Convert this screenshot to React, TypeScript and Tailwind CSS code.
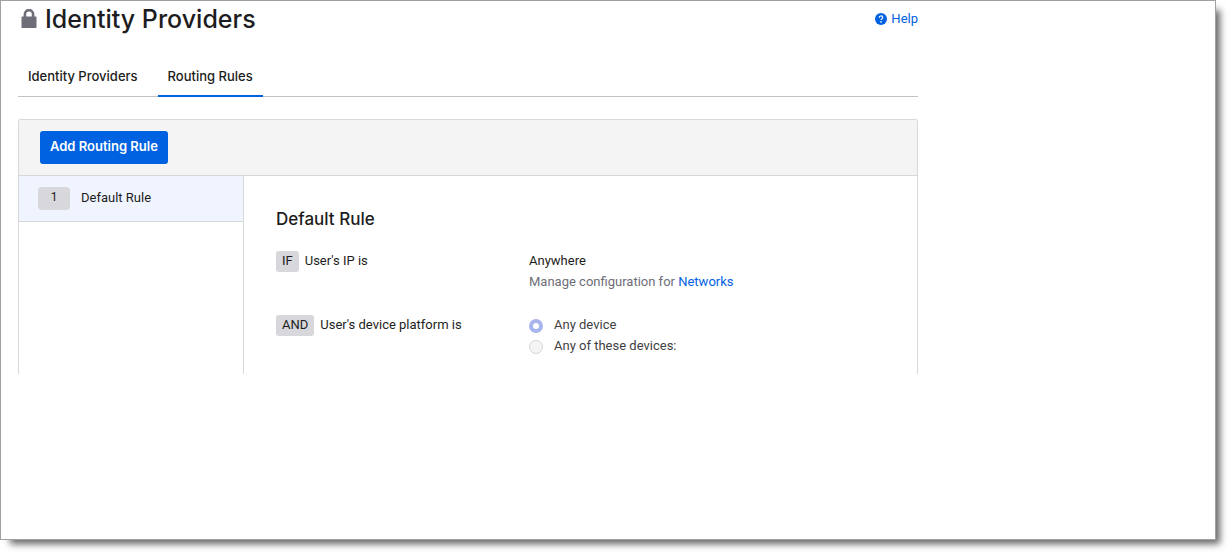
import React from "react";

const tabs = [
    { label: "Identity Providers", active: false },
    { label: "Routing Rules", active: true },
];

const rules = [{ position: 1, name: "Default Rule" }];

const devices = [
    { id: "any", label: "Any device" },
    { id: "some", label: "Any of these devices:" },
];

function LockIcon() {
    return (
        <svg viewBox="0 0 16 20" className="w-4 h-5 shrink-0" aria-hidden="true">
            <path d="M3.9 9V5.2a4.1 4.1 0 0 1 8.2 0V9" fill="none" stroke="#6e6e78" strokeWidth="2.6" />
            <rect x="0.5" y="7.5" width="15" height="11.5" rx="0.8" fill="#6e6e78" />
        </svg>
    );
}

function HelpIcon() {
    return (
        <svg viewBox="0 0 12 12" className="w-3 h-3" aria-hidden="true">
            <circle cx="6" cy="6" r="6" fill="#0062e0" />
            <path d="M4.3 4.7a1.7 1.6 0 1 1 2.5 1.3c-.6.35-.8.5-.8 1.1" fill="none" stroke="#fff" strokeWidth="1.2" />
            <circle cx="6" cy="8.9" r="0.8" fill="#fff" />
        </svg>
    );
}

function Keyword({ children }: { children: React.ReactNode }) {
    return (
        <span className="h-[21px] mt-px px-1.5 rounded-[3px] bg-[#d7d7dc] leading-[19px]">{children}</span>
    );
}

export default function App() {
    return (
        <div className="min-h-screen bg-white pr-[15px] pb-[15px] font-['Roboto',sans-serif] text-[13px] text-[#1d1d21]">
            <main className="min-h-[calc(100vh-15px)] border border-[#a0a0a0] bg-white px-[17px] shadow-[7px_7px_7px_-3px_#666666]">
                <div className="max-w-[900px]">
                    {/* Page title */}
                    <header className="flex items-center justify-between h-[35px]">
                        <div className="flex items-center gap-2 pl-[3px]">
                            <LockIcon />
                            <h1 className="font-['Inter',sans-serif] text-[25px] leading-8 font-medium">Identity Providers</h1>
                        </div>
                        <a href="#help" className="flex items-center gap-1 text-[#0062e0]">
                            <HelpIcon />
                            Help
                        </a>
                    </header>

                    {/* Tabs */}
                    <nav className="flex gap-2.5 mt-5 h-[41px] border-b border-[#c1c1c8] font-['Inter',sans-serif] leading-5 font-medium">
                        {tabs.map((tab) => (
                            <a
                                key={tab.label}
                                href="#tab"
                                aria-current={tab.active ? "page" : undefined}
                                className={
                                    tab.active
                                        ? "-mb-px px-2.5 pt-2.5 border-b-2 border-[#0062e0]"
                                        : "px-2.5 pt-2.5"
                                }
                            >
                                {tab.label}
                            </a>
                        ))}
                    </nav>

                    {/* Rules panel */}
                    <section className="mt-[22px] border border-b-0 border-[#d7d7dc] rounded-t-[3px]">
                        <div className="flex items-center h-14 px-[21px] bg-[#f4f4f4] border-b border-[#d7d7dc]">
                            <button type="button" className="h-[33px] px-2.5 pb-0.5 rounded-[3px] bg-[#0062e0] font-['Inter',sans-serif] text-white font-semibold">
                                Add Routing Rule
                            </button>
                        </div>

                        <div className="flex">
                            <ul className="w-[225px] shrink-0 border-r border-[#d7d7dc]">
                                {rules.map((rule) => (
                                    <li key={rule.position}>
                                        <button
                                            type="button"
                                            className="flex items-center gap-[11px] w-full h-[46px] px-[19px] bg-[#f0f4ff] border-b border-[#d7d7dc] text-left leading-[21px]"
                                        >
                                            <span className="w-8 h-[23px] rounded-[4px] bg-[#d7d7dc] text-center text-xs leading-[21px]">
                                                {rule.position}
                                            </span>
                                            <span className="pb-0.5">{rule.name}</span>
                                        </button>
                                    </li>
                                ))}
                            </ul>

                            <div className="flex-1 px-8 pt-[31px] pb-[18px]">
                                <h2 className="font-['Inter',sans-serif] text-[17px] leading-6 font-medium">Default Rule</h2>

                                <div className="flex mt-[19px] leading-[21px]">
                                    <div className="flex items-start gap-1.5 w-[253px]">
                                        <Keyword>IF</Keyword>
                                        <span>User's IP is</span>
                                    </div>
                                    <div>
                                        <p>Anywhere</p>
                                        <p className="text-[#6e6e78]">
                                            Manage configuration for <a href="#networks" className="text-[#0062e0]">Networks</a>
                                        </p>
                                    </div>
                                </div>

                                <div className="flex mt-[22px] leading-[21px]">
                                    <div className="flex items-start gap-1.5 w-[253px]">
                                        <Keyword>AND</Keyword>
                                        <span>User's device platform is</span>
                                    </div>
                                    <div className="text-[#3f3f44]">
                                        {devices.map((device) => (
                                            <label key={device.id} className="flex items-center gap-[11px]">
                                                <input
                                                    type="radio"
                                                    name="device"
                                                    value={device.id}
                                                    defaultChecked={device.id === "any"}
                                                    className="appearance-none w-3.5 h-3.5 mt-0.5 rounded-full bg-[#f4f4f4] border border-[#d7d7dc] checked:bg-white checked:border-4 checked:border-[#a7b5ec]"
                                                />
                                                {device.label}
                                            </label>
                                        ))}
                                    </div>
                                </div>
                            </div>
                        </div>
                    </section>
                </div>
            </main>
        </div>
    );
}
